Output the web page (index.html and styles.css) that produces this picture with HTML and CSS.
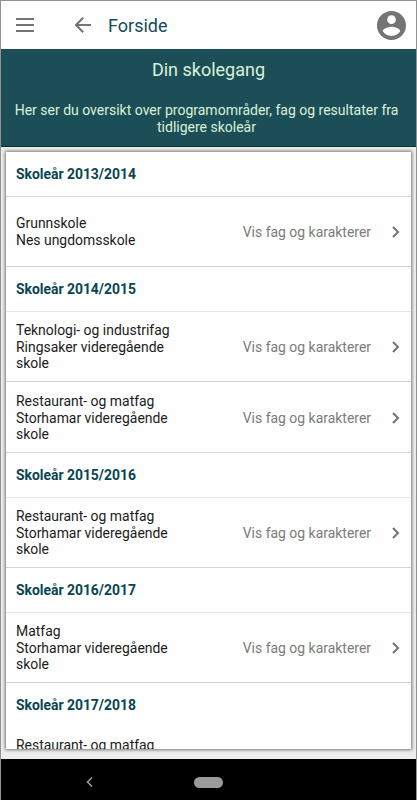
FILE: index.html
```html
<!DOCTYPE html>
<html lang="no">
<head>
    <meta charset="UTF-8">
    <meta name="viewport" content="width=device-width, initial-scale=1.0">
    <title>Din skolegang</title>
    <link rel="stylesheet" href="styles.css">
</head>
<body>
    <div class="app">
        <header class="topbar">
            <svg class="menu" viewBox="0 0 18 14" width="18" height="14"><path d="M0 1h18M0 7h18M0 13h18"/></svg>
            <svg class="back" viewBox="0 0 16 16" width="16" height="16"><path d="M8.2 .8L1 8l7.2 7.2M1 8h15"/></svg>
            <span class="topbar-title">Forside</span>
            <svg class="avatar" viewBox="2 2 20 20" width="29" height="29"><path d="M12 2C6.48 2 2 6.48 2 12s4.48 10 10 10 10-4.480 10-10S17.52 2 12 2zm0 3c1.660 0 3 1.340 3 3s-1.340 3-3 3-3-1.340-3-3 1.340-3 3-3zm0 14.200c-2.500 0-4.710-1.280-6-3.220.030-1.990 4-3.080 6-3.080 1.990 0 5.970 1.090 6 3.080-1.290 1.940-3.500 3.220-6 3.220z"/></svg>
        </header>

        <div class="banner">
            <h1>Din skolegang</h1>
            <p>Her ser du oversikt over programområder, fag og resultater fra tidligere skoleår</p>
        </div>

        <main class="content">
            <div class="card">
                <h2 class="first">Skoleår 2013/2014</h2>
                <div class="row short">
                    <div class="school">Grunnskole<br>Nes ungdomsskole</div>
                    <span class="link">Vis fag og karakterer</span>
                    <svg class="chevron" viewBox="0 0 8 12" width="8" height="12"><path d="M1 1l5 5-5 5"/></svg>
                </div>

                <h2>Skoleår 2014/2015</h2>
                <div class="row short">
                    <div class="school">Teknologi- og industrifag<br>Ringsaker videregående skole</div>
                    <span class="link">Vis fag og karakterer</span>
                    <svg class="chevron" viewBox="0 0 8 12" width="8" height="12"><path d="M1 1l5 5-5 5"/></svg>
                </div>
                <div class="row">
                    <div class="school">Restaurant- og matfag<br>Storhamar videregående skole</div>
                    <span class="link">Vis fag og karakterer</span>
                    <svg class="chevron" viewBox="0 0 8 12" width="8" height="12"><path d="M1 1l5 5-5 5"/></svg>
                </div>

                <h2>Skoleår 2015/2016</h2>
                <div class="row short">
                    <div class="school">Restaurant- og matfag<br>Storhamar videregående skole</div>
                    <span class="link">Vis fag og karakterer</span>
                    <svg class="chevron" viewBox="0 0 8 12" width="8" height="12"><path d="M1 1l5 5-5 5"/></svg>
                </div>

                <h2>Skoleår 2016/2017</h2>
                <div class="row short">
                    <div class="school">Matfag<br>Storhamar videregående skole</div>
                    <span class="link">Vis fag og karakterer</span>
                    <svg class="chevron" viewBox="0 0 8 12" width="8" height="12"><path d="M1 1l5 5-5 5"/></svg>
                </div>

                <h2 class="last">Skoleår 2017/2018</h2>
                <div class="row cut">
                    <div class="school">Restaurant- og matfag</div>
                </div>
            </div>
        </main>

        <nav class="navbar">
            <svg class="nav-back" viewBox="0 0 7 10" width="7" height="10"><path d="M6 .5L1.500 5 6 9.500"/></svg>
            <span class="pill"></span>
        </nav>
    </div>
</body>
</html>
```
FILE: styles.css
```css
* {
    box-sizing: border-box;
}
body {
    margin: 0;
    font-family: Roboto, "Liberation Sans", sans-serif;
    font-size: 13.950px;
    background: #ededeb;
}
.app {
    display: flex;
    flex-direction: column;
    height: 800px;
    overflow: hidden;
    border: 1px solid #929292;
    border-bottom: none;
}
svg {
    flex: none;
    fill: none;
    stroke: #737473;
    stroke-width: 2;
}
.topbar {
    display: flex;
    align-items: center;
    flex: none;
    height: 48px;
    padding: 0 10px 0 15px;
    background: #fdfefd;
}
.back {
    margin-left: 41px;
}
.topbar-title {
    margin-left: 17px;
    font-size: 18px;
    color: #174c59;
}
.avatar {
    margin-left: auto;
    fill: #737473;
    stroke: none;
}
.banner {
    flex: none;
    height: 98px;
    background: #1c4e58;
    border-bottom: 1px solid #06323d;
    color: #daf2d9;
    text-align: center;
}
.banner h1 {
    margin: 0;
    padding-top: 10px;
    font-size: 18px;
    font-weight: 400;
    line-height: 22px;
}
.banner p {
    margin: 21px 12px 0 8px;
    font-size: 14px;
    line-height: 16.600px;
}
.content {
    flex: 1;
    min-height: 0;
    padding: 5px 5px 10px;
}
.card {
    height: 100%;
    overflow: hidden;
    background: #fdfefd;
    box-shadow: 0 0 3px 1px rgba(0, 0, 0, 0.5);
}
.card h2 {
    margin: 0;
    height: 45px;
    padding-left: 10px;
    border-bottom: 1px solid #e7e9e8;
    font-size: 13.900px;
    font-weight: 700;
    line-height: 45px;
    color: #084451;
}
.card h2.first {
    border-color: #d3d5d4;
}
.card h2.last {
    border-color: transparent;
}
.row {
    display: flex;
    align-items: center;
    height: 71px;
    padding: 2px 11px 0 10px;
    border-bottom: 1px solid #d3d5d4;
}
.row.short {
    height: 70px;
    padding-top: 1px;
}
.row.cut {
    align-items: flex-start;
    padding-top: 9px;
}
.school {
    width: 165px;
    line-height: 16.600px;
    color: #1c1c1c;
}
.link {
    margin-left: auto;
    color: #7b7c7b;
}
.chevron {
    margin-left: 21px;
}
.navbar {
    display: grid;
    grid-template-columns: 1fr auto 1fr;
    align-items: start;
    flex: none;
    height: 41px;
    padding-top: 18px;
    background: #000;
}
.nav-back {
    margin-left: 85px;
    stroke: #a0a19f;
    stroke-width: 1.500;
}
.pill {
    width: 29px;
    height: 11px;
    border-radius: 6px;
    background: #9b9c99;
}
```
